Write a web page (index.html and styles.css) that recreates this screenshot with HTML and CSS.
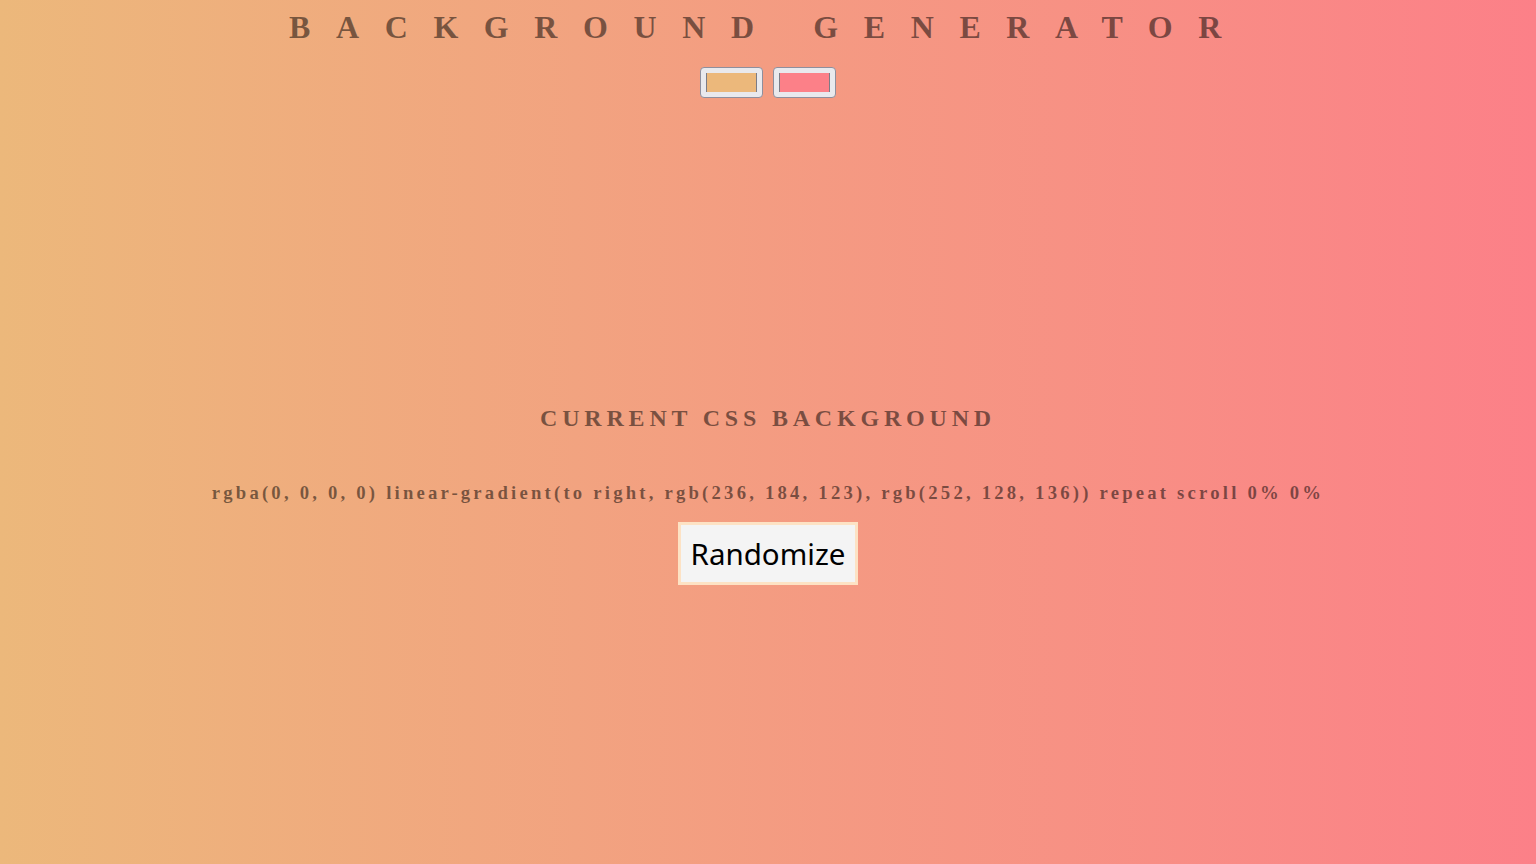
FILE: index.html
```html
<!DOCTYPE html>
<html lang="en">
<head>
<meta charset="utf-8">
<title>Background Generator</title>
<link rel="stylesheet" href="styles.css">
</head>
<body>
<main class="page">
  <h1 class="title">Background Generator</h1>
  <div class="pickers">
    <span class="picker"><span class="swatch swatch-a"></span></span>
    <span class="picker"><span class="swatch swatch-b"></span></span>
  </div>
  <h2 class="label">Current CSS Background</h2>
  <h3 class="css-value">rgba(0, 0, 0, 0) linear-gradient(to right, rgb(236, 184, 123), rgb(252, 128, 136)) repeat scroll 0% 0%</h3>
  <button class="randomize" type="button">Randomize</button>
</main>
</body>
</html>
```

FILE: styles.css
```css
html, body {
  margin: 0;
  padding: 0;
}

body {
  min-height: 100vh;
  background: linear-gradient(to right, rgb(236, 184, 123), rgb(252, 128, 136));
  font-family: "Liberation Serif", "Times New Roman", serif;
  color: rgba(0, 0, 0, 0.5);
}

.page {
  display: flex;
  flex-direction: column;
  align-items: center;
  text-align: center;
}

.title {
  margin: 0;
  padding-top: 9px;
  font-size: 32px;
  line-height: 36px;
  font-weight: 700;
  letter-spacing: 0.8em;
  text-transform: uppercase;
}

.pickers {
  display: flex;
  gap: 10px;
  margin-top: 22px;
}

.picker {
  box-sizing: border-box;
  width: 63px;
  height: 31px;
  padding: 5px 5px;
  background: #e9e9ed;
  border: 1px solid #8f8f9d;
  border-radius: 4px;
  display: flex;
}

.swatch {
  flex: 1;
  border-left: 1px solid #7c7c86;
  border-right: 1px solid #7c7c86;
}

.swatch-a { background: rgb(236, 184, 123); }
.swatch-b { background: rgb(252, 128, 136); }

.label {
  margin: 306px 0 0;
  font-size: 24px;
  line-height: 28px;
  font-weight: 700;
  letter-spacing: 0.2em;
  text-transform: uppercase;
}

.css-value {
  margin: 50px 0 0;
  font-size: 18.72px;
  line-height: 22px;
  font-weight: 700;
  letter-spacing: 3.2px;
}

.randomize {
  box-sizing: border-box;
  margin-top: 18px;
  height: 63px;
  padding: 0 10px;
  border: 3px solid #fde2c4;
  background: #f4f4f4;
  color: #000;
  font-family: "Noto Sans", "Open Sans", sans-serif;
  font-size: 29.5px;
  line-height: 1;
  cursor: pointer;
}
```
